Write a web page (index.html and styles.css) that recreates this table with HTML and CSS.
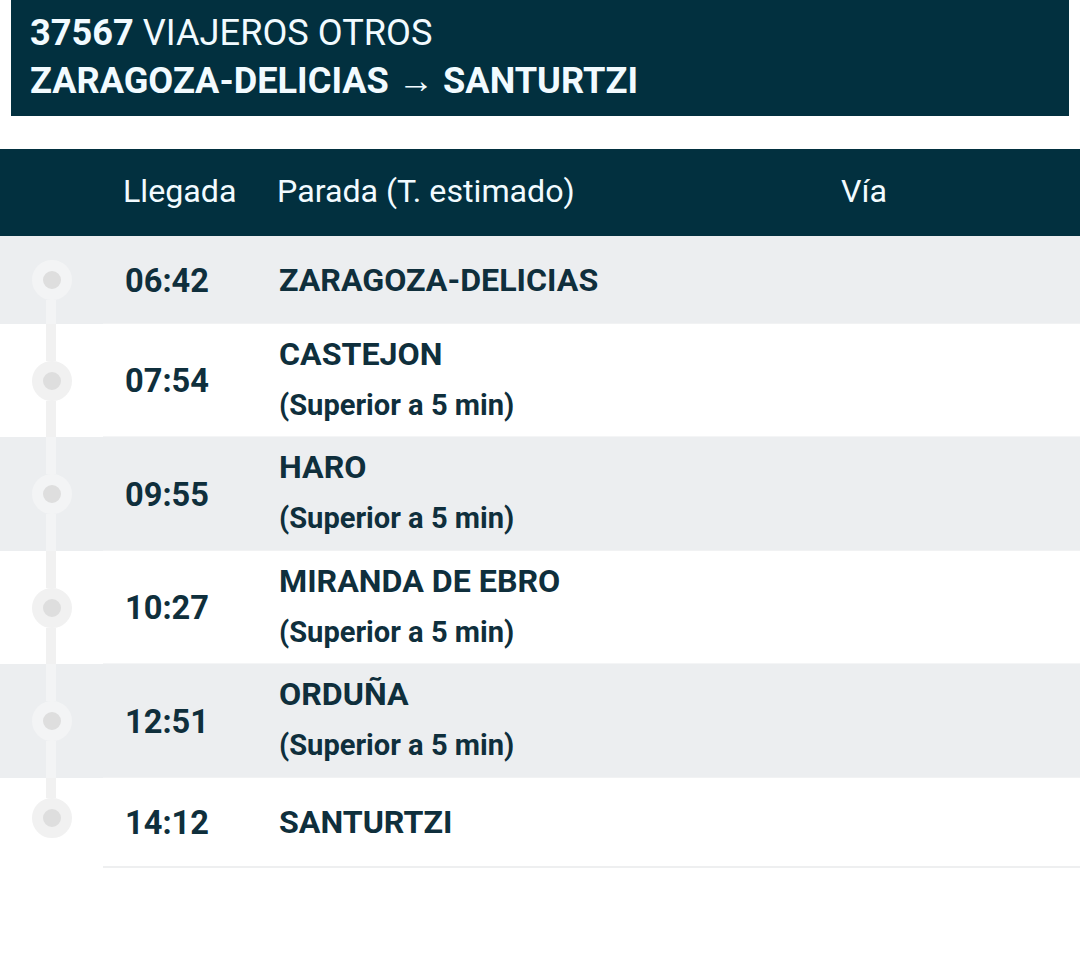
FILE: index.html
```html
<!DOCTYPE html>
<html lang="es">
<head>
<meta charset="utf-8">
<title>37567 VIAJEROS OTROS</title>
<link rel="stylesheet" href="styles.css">
</head>
<body>
<div class="title-box">
  <div class="title-line"><b>37567</b> VIAJEROS OTROS</div>
  <div class="title-line route">ZARAGOZA-DELICIAS → SANTURTZI</div>
</div>

<div class="table">
  <div class="thead">
    <div class="th-tl"></div>
    <div class="th th-time">Llegada</div>
    <div class="th th-stop">Parada (T. estimado)</div>
    <div class="th th-via">Vía</div>
  </div>

  <div class="row gray single">
    <div class="tl first"><span class="seg top"></span><span class="dot"></span><span class="seg bottom"></span></div>
    <div class="cell time">06:42</div>
    <div class="cell stop"><div class="name">ZARAGOZA-DELICIAS</div></div>
    <div class="cell via"></div>
  </div>

  <div class="row double">
    <div class="tl"><span class="seg top"></span><span class="dot"></span><span class="seg bottom"></span></div>
    <div class="cell time">07:54</div>
    <div class="cell stop"><div class="name">CASTEJON</div><div class="sub">(Superior a 5 min)</div></div>
    <div class="cell via"></div>
  </div>

  <div class="row gray double">
    <div class="tl"><span class="seg top"></span><span class="dot"></span><span class="seg bottom"></span></div>
    <div class="cell time">09:55</div>
    <div class="cell stop"><div class="name">HARO</div><div class="sub">(Superior a 5 min)</div></div>
    <div class="cell via"></div>
  </div>

  <div class="row double">
    <div class="tl"><span class="seg top"></span><span class="dot"></span><span class="seg bottom"></span></div>
    <div class="cell time">10:27</div>
    <div class="cell stop"><div class="name">MIRANDA DE EBRO</div><div class="sub">(Superior a 5 min)</div></div>
    <div class="cell via"></div>
  </div>

  <div class="row gray double">
    <div class="tl"><span class="seg top"></span><span class="dot"></span><span class="seg bottom"></span></div>
    <div class="cell time">12:51</div>
    <div class="cell stop"><div class="name">ORDUÑA</div><div class="sub">(Superior a 5 min)</div></div>
    <div class="cell via"></div>
  </div>

  <div class="row single last">
    <div class="tl last"><span class="seg top"></span><span class="dot"></span><span class="seg bottom"></span></div>
    <div class="cell time">14:12</div>
    <div class="cell stop"><div class="name">SANTURTZI</div></div>
    <div class="cell via"></div>
  </div>
</div>
</body>
</html>
```

FILE: styles.css
```css
* { box-sizing: border-box; }
html, body { margin: 0; padding: 0; background: #ffffff; }
body {
  font-family: Roboto, "Liberation Sans", Arial, sans-serif;
  color: #0f2f3c;
  width: 1080px;
  height: 962px;
  overflow: hidden;
}

.title-box {
  margin: 0 11px;
  height: 116px;
  background: #02303f;
  color: #f2fbff;
  padding: 9px 0 0 19px;
}
.title-line {
  font-size: 36.2px;
  line-height: 48px;
  font-weight: 400;
  white-space: nowrap;
}
.title-line b { font-weight: 700; }
.title-line.route { font-weight: 700; }

.table { margin-top: 33px; }

.thead {
  display: grid;
  grid-template-columns: 103px 154px 565px 1fr;
  height: 87px;
  background: #02303f;
  color: #f2fbff;
  align-items: center;
}
.th {
  font-size: 32.2px;
  font-weight: 400;
  padding-left: 20px;
  padding-bottom: 3px;
}
.th-via { padding-left: 19px; }

.row {
  display: grid;
  grid-template-columns: 103px 154px 565px 1fr;
  background: #ffffff;
}
.row.gray { background: #eceef0; }
.row.single { height: 88px; }
.row.double { height: 113px; }
.row.gray.double { height: 114px; }
.row.last { height: 90px; }

.cell {
  display: flex;
  flex-direction: column;
  justify-content: center;
  padding-left: 22px;
  border-bottom: 1px solid #f4f5f6;
}
.row.gray .cell { border-bottom-color: #f1f2f3; }
.row.last .cell { border-bottom: 2px solid #eeeff0; }

.time {
  font-size: 32.6px;
  font-weight: 700;
  padding-top: 2px;
}
.stop .name {
  font-size: 32.2px;
  font-weight: 700;
  line-height: 44px;
  white-space: nowrap;
}
.stop .sub {
  font-size: 29.1px;
  font-weight: 700;
  line-height: 44px;
  margin-top: 7px;
  white-space: nowrap;
}
.row.double .stop { padding-bottom: 2px; }

/* timeline */
.tl {
  display: flex;
  flex-direction: column;
  align-items: flex-start;
}
.seg {
  flex: 1;
  width: 10px;
  margin-left: 46px;
  background: #f1f1f1;
}
.row.gray .seg { background: #f3f4f5; }
.tl.first .seg.top { visibility: hidden; }
.tl.last .seg.bottom { visibility: hidden; }
.tl.last .seg.top { flex: 0 0 20px; }
.dot {
  width: 40px;
  height: 40px;
  margin-left: 32px;
  border-radius: 50%;
  background: #dedede;
  border: 11px solid #f1f1f1;
  flex: none;
}
.row.gray .dot { border-color: #f3f4f5; }
```
